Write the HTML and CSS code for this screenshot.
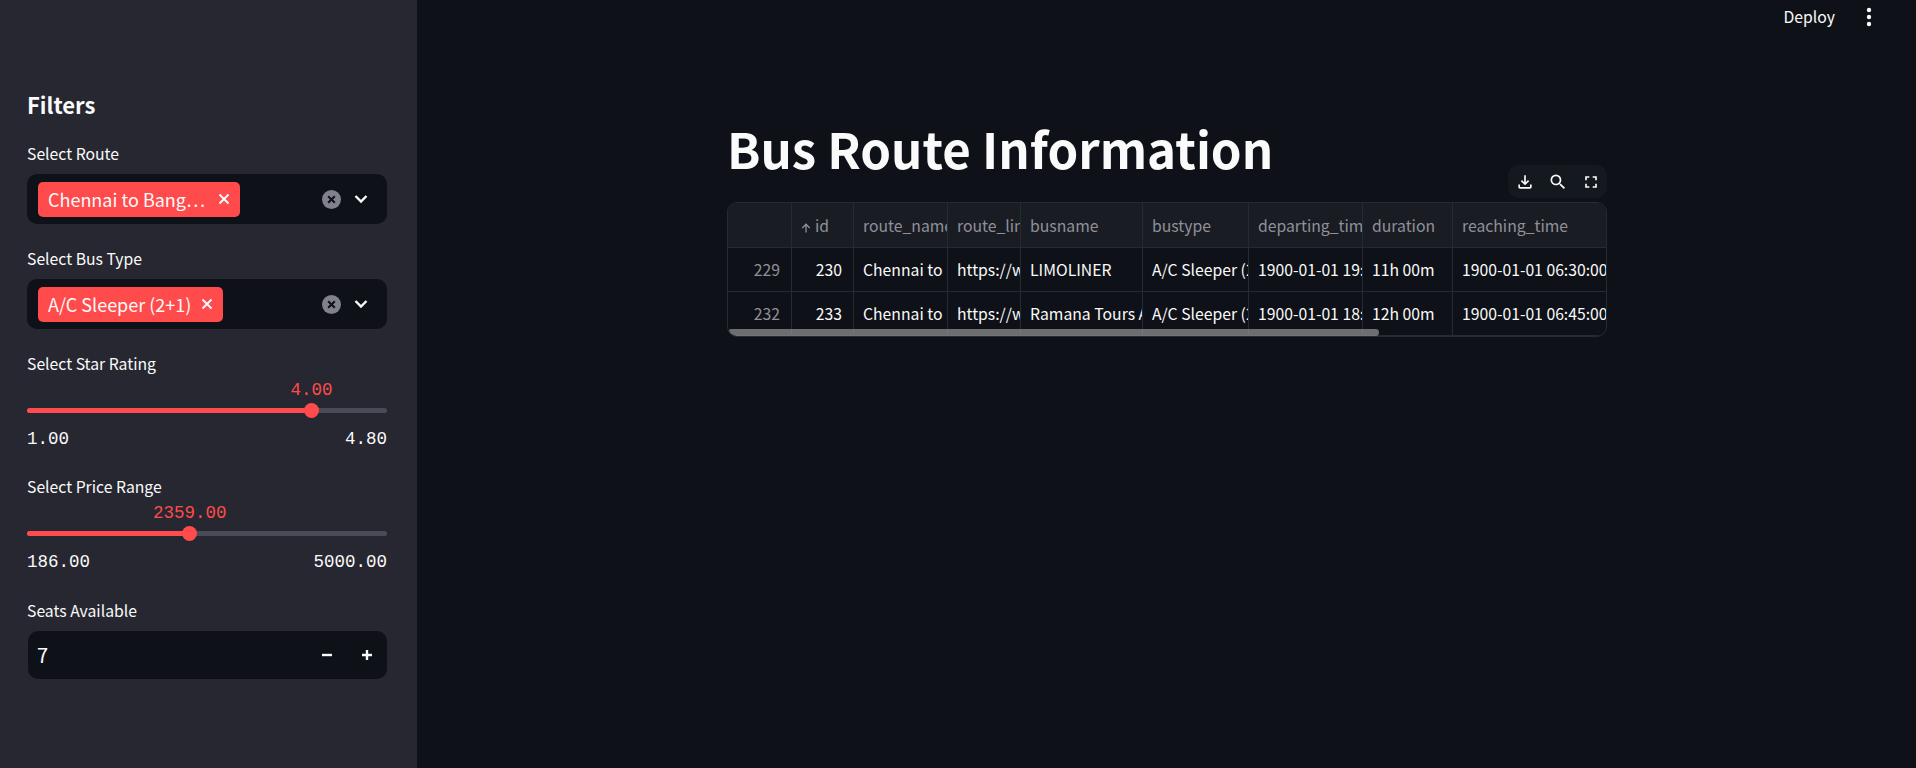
FILE: index.html
```html
<!DOCTYPE html>
<html lang="en">
<head>
    <meta charset="UTF-8">
    <title>Bus Route Information</title>
    <link rel="stylesheet" href="styles.css">
</head>
<body>
    <aside class="sidebar">
        <h2 class="side-title">Filters</h2>

        <label class="label">Select Route</label>
        <div class="select">
            <span class="tag">
                <span class="tag-text tag-text-cut">Chennai to Bang…</span>
                <svg class="tag-x" viewBox="0 0 12 12"><path d="M1.500 1.500l9 9M10.500 1.500l-9 9"/></svg>
            </span>
            <svg class="clear" viewBox="0 0 20 20"><circle cx="10" cy="10" r="10"/><path d="M6.500 6.500l7 7M13.500 6.500l-7 7"/></svg>
            <svg class="chevron" viewBox="0 0 14 10"><path d="M1.500 2l5.500 5.500L12.500 2"/></svg>
        </div>

        <label class="label label-next">Select Bus Type</label>
        <div class="select">
            <span class="tag">
                <span class="tag-text">A/C Sleeper (2+1)</span>
                <svg class="tag-x" viewBox="0 0 12 12"><path d="M1.500 1.500l9 9M10.500 1.500l-9 9"/></svg>
            </span>
            <svg class="clear" viewBox="0 0 20 20"><circle cx="10" cy="10" r="10"/><path d="M6.500 6.500l7 7M13.500 6.500l-7 7"/></svg>
            <svg class="chevron" viewBox="0 0 14 10"><path d="M1.500 2l5.500 5.500L12.500 2"/></svg>
        </div>

        <label class="label label-slider">Select Star Rating</label>
        <div class="slider">
            <div class="slider-value" style="left: 79%">4.00</div>
            <div class="track"><div class="fill" style="width: 79%"></div><div class="thumb" style="left: 79%"></div></div>
            <div class="ticks"><span>1.00</span><span>4.80</span></div>
        </div>

        <label class="label label-price">Select Price Range</label>
        <div class="slider">
            <div class="slider-value" style="left: 45.200%">2359.00</div>
            <div class="track"><div class="fill" style="width: 45.200%"></div><div class="thumb" style="left: 45.200%"></div></div>
            <div class="ticks"><span>186.00</span><span>5000.00</span></div>
        </div>

        <label class="label label-seats">Seats Available</label>
        <div class="number">
            <span class="number-value">7</span>
            <svg class="step" viewBox="0 0 12 12"><path d="M1 6h10"/></svg>
            <svg class="step step-plus" viewBox="0 0 12 12"><path d="M1 6h10M6 1v10"/></svg>
        </div>
    </aside>

    <main class="main">
        <header class="topbar">
            <span class="deploy">Deploy</span>
            <svg class="kebab" viewBox="0 0 6 20"><circle cx="3" cy="3" r="2.200"/><circle cx="3" cy="10" r="2.200"/><circle cx="3" cy="17" r="2.200"/></svg>
        </header>

        <div class="content">
            <h1 class="title">Bus Route Information</h1>

            <div class="frame-wrap">
                <div class="toolbar">
                    <svg viewBox="0 0 24 24"><path d="M18 15v3H6v-3H4v3c0 1.100.9 2 2 2h12c1.100 0 2-.9 2-2v-3h-2zm-1-4l-1.410-1.410L13 12.170V4h-2v8.170L8.410 9.590 7 11l5 5 5-5z"/></svg>
                    <svg viewBox="0 0 24 24"><path d="M15.500 14h-.79l-.28-.27A6.471 6.471 0 0 0 16 9.500 6.500 6.500 0 1 0 9.500 16c1.610 0 3.090-.59 4.230-1.570l.27.28v.79l5 4.990L20.490 19l-4.990-5zm-6 0C7.010 14 5 11.990 5 9.500S7.010 5 9.500 5 14 7.010 14 9.500 11.990 14 9.500 14z"/></svg>
                    <svg viewBox="0 0 24 24"><path d="M7 14H5v5h5v-2H7v-3zm-2-4h2V7h3V5H5v5zm12 7h-3v2h5v-5h-2v3zM14 5v2h3v3h2V5h-5z"/></svg>
                </div>

                <div class="table">
                    <div class="cell head"></div>
                    <div class="cell head"><svg class="sort" viewBox="0 0 12 12"><path d="M6 11.500V1.500M1.500 6L6 1.500 10.500 6"/></svg>id</div>
                    <div class="cell head">route_name</div>
                    <div class="cell head">route_link</div>
                    <div class="cell head">busname</div>
                    <div class="cell head">bustype</div>
                    <div class="cell head">departing_time</div>
                    <div class="cell head">duration</div>
                    <div class="cell head">reaching_time</div>

                    <div class="cell num dim">229</div>
                    <div class="cell num">230</div>
                    <div class="cell">Chennai to Bangalore</div>
                    <div class="cell">https://www.redbus.in</div>
                    <div class="cell">LIMOLINER</div>
                    <div class="cell">A/C Sleeper (2+1)</div>
                    <div class="cell">1900-01-01 19:30:00</div>
                    <div class="cell">11h 00m</div>
                    <div class="cell">1900-01-01 06:30:00</div>

                    <div class="cell num dim">232</div>
                    <div class="cell num">233</div>
                    <div class="cell">Chennai to Bangalore</div>
                    <div class="cell">https://www.redbus.in</div>
                    <div class="cell">Ramana Tours And Travels</div>
                    <div class="cell">A/C Sleeper (2+1)</div>
                    <div class="cell">1900-01-01 18:45:00</div>
                    <div class="cell">12h 00m</div>
                    <div class="cell">1900-01-01 06:45:00</div>

                    <div class="scrollbar"></div>
                </div>
            </div>
        </div>
    </main>
</body>
</html>
```

FILE: styles.css
```css
* {
    margin: 0;
    padding: 0;
    box-sizing: border-box;
}
html, body {
    height: 768px;
    overflow: hidden;
}
body {
    display: flex;
    background: #0e1117;
    color: #fafafa;
    font-family: "Noto Sans CJK SC", "Noto Sans", sans-serif;
}

/* sidebar */
.sidebar {
    width: 417px;
    flex: none;
    height: 768px;
    background: #262730;
    padding: 86px 30px 0 27px;
}
.side-title {
    font-size: 22px;
    font-weight: 600;
    line-height: 36px;
    margin-bottom: 21px;
}
.label {
    display: block;
    font-size: 15.750px;
    line-height: 22px;
    margin-bottom: 9px;
}
.label-next { margin-top: 24px; }
.label-slider { margin-top: 24px; }
.label-price { margin-top: 26.500px; }
.label-seats { margin-top: 27px; }

.select {
    height: 50px;
    background: #0e1117;
    border-radius: 10px;
    display: flex;
    align-items: center;
    padding-left: 11px;
}
.tag {
    height: 35px;
    background: #ff4b4b;
    border-radius: 5px;
    display: flex;
    align-items: center;
    padding: 0 10px 0 10px;
    font-size: 18px;
    margin-right: auto;
}
.tag-text {
    line-height: 35px;
}
.tag-text-cut {
    padding-right: 3px;
}
.tag-x {
    width: 12px;
    height: 12px;
    margin-left: 10px;
    fill: none;
    stroke: #fafafa;
    stroke-width: 2;
}
.clear {
    width: 19px;
    height: 19px;
    margin-right: 13px;
}
.clear circle { fill: #80818c; }
.clear path {
    fill: none;
    stroke: #0e1117;
    stroke-width: 2.200;
}
.chevron {
    width: 14px;
    height: 10px;
    margin-right: 19px;
    fill: none;
    stroke: #fafafa;
    stroke-width: 2.400;
}

.slider {
    position: relative;
    padding-top: 24px;
}
.slider-value {
    position: absolute;
    top: -5.500px;
    transform: translateX(-50%);
    font-family: "Liberation Mono", "DejaVu Sans Mono", monospace;
    font-size: 17.500px;
    line-height: 22px;
    color: #ff4b4b;
}
.track {
    position: relative;
    height: 5px;
    border-radius: 3px;
    background: #4a4b57;
}
.fill {
    height: 5px;
    border-radius: 3px;
    background: #ff4b4b;
}
.thumb {
    position: absolute;
    top: -5px;
    width: 15px;
    height: 15px;
    margin-left: -7.500px;
    border-radius: 50%;
    background: #ff4b4b;
}
.ticks {
    display: flex;
    justify-content: space-between;
    font-family: "Liberation Mono", "DejaVu Sans Mono", monospace;
    font-size: 17.500px;
    line-height: 22px;
    margin-top: 14.500px;
}

.number {
    width: 359px;
    margin-left: 1px;
    height: 48px;
    background: #0e1117;
    border-radius: 10px;
    display: flex;
    align-items: center;
    padding-left: 9px;
}
.number-value {
    font-size: 20px;
    margin-right: auto;
}
.step {
    width: 12px;
    height: 12px;
    fill: none;
    stroke: #fafafa;
    stroke-width: 2.400;
    margin-right: 14px;
}
.step-plus { margin-left: 14px; }

/* main area */
.main {
    flex: 1;
    display: flex;
    flex-direction: column;
}
.topbar {
    height: 33px;
    display: flex;
    align-items: center;
    justify-content: flex-end;
    padding-right: 44px;
}
.deploy {
    font-size: 15.750px;
    margin-right: 31px;
}
.kebab {
    width: 6px;
    height: 20px;
    fill: #fafafa;
}
.content {
    width: 880px;
    margin: 80px 0 0 310px;
}
.title {
    font-size: 49.200px;
    font-weight: 700;
    line-height: 70px;
    margin-bottom: 19px;
}
.frame-wrap {
    position: relative;
}
.toolbar {
    position: absolute;
    right: 0;
    top: -37px;
    width: 99px;
    height: 33px;
    background: #14181f;
    border-radius: 10px;
    display: flex;
    align-items: center;
    gap: 13px;
    padding: 0 7px;
}
.toolbar svg {
    width: 20px;
    height: 20px;
    fill: #fafafa;
    flex: none;
}

.table {
    position: relative;
    display: grid;
    grid-template-columns: 64px 62px 94px 73px 122px 106px 114px 90px 154px;
    grid-template-rows: 45px 44px 44px;
    height: 135px;
    border: 1px solid #262a33;
    border-radius: 10px;
    overflow: hidden;
    font-size: 15.750px;
}
.cell {
    display: flex;
    align-items: center;
    padding: 0 11px 0 9px;
    overflow: hidden;
    white-space: nowrap;
    border-right: 1px solid #262a33;
    border-bottom: 1px solid #262a33;
}
.head {
    background: #1a1c24;
    color: #8f9198;
}
.num { justify-content: flex-end; }
.dim { color: #8f9198; }
.sort {
    width: 10px;
    height: 10px;
    margin: 5px 4px 0 0;
    fill: none;
    stroke: #8f9198;
    stroke-width: 1.500;
    flex: none;
}
.scrollbar {
    position: absolute;
    left: 0;
    bottom: 0;
    width: 651px;
    height: 7px;
    border-radius: 4px;
    background: rgba(150, 150, 150, 0.7);
}
```
